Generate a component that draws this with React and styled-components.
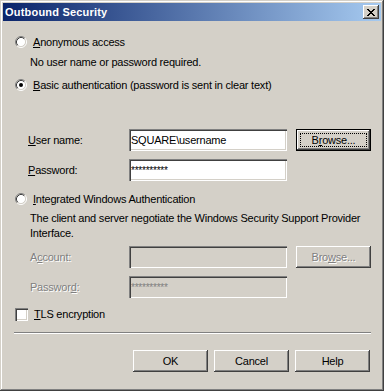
import styled, { createGlobalStyle, css } from "styled-components";

const GlobalStyle = createGlobalStyle`
  html, body {
    margin: 0;
    padding: 0;
    background: #d4d0c8;
  }
  * {
    box-sizing: border-box;
  }
`;

const FONT = `"Liberation Sans", Arial, sans-serif`;

const Window = styled.div`
  width: 384px;
  height: 391px;
  padding: 3px;
  background: #d4d0c8;
  font-family: ${FONT};
  font-size: 11px;
  letter-spacing: -0.22px;
  color: #000;
  box-shadow: inset -1px -1px #404040, inset 1px 1px #d4d0c8,
    inset -2px -2px #808080, inset 2px 2px #ffffff;
  display: flex;
  flex-direction: column;
`;

const TitleBar = styled.div`
  height: 18px;
  display: flex;
  align-items: center;
  justify-content: space-between;
  padding: 0 2px 0 2px;
  background: linear-gradient(to right, #0a246a, #a6caf0);
`;

const Title = styled.span`
  color: #fff;
  font-weight: bold;
  font-size: 11px;
  letter-spacing: 0.2px;
`;

const raised = css`
  background: #d4d0c8;
  border: none;
  box-shadow: inset -1px -1px #404040, inset 1px 1px #ffffff,
    inset -2px -2px #808080, inset 2px 2px #d4d0c8;
`;

const CloseButton = styled.button`
  ${raised};
  width: 16px;
  height: 14px;
  padding: 0;
  display: flex;
  align-items: center;
  justify-content: center;
`;

const Body = styled.div`
  display: flex;
  flex-direction: column;
  padding: 0 10px 0 12px;
`;

const Option = styled.label`
  display: flex;
  align-items: center;
  gap: 6px;
  height: 16px;
  margin-top: ${(p) => p.$top}px;
`;

const Desc = styled.p`
  margin: ${(p) => p.$top}px 0 0 15px;
  line-height: ${(p) => p.$lh || 14}px;
  max-width: 345px;
`;

const Key = styled.span`
  text-decoration: underline;
`;

const FieldRow = styled.div`
  display: grid;
  grid-template-columns: 92px 158px 75px;
  column-gap: 9px;
  align-items: center;
  height: 22px;
  padding-left: 13px;
  margin-top: ${(p) => p.$top}px;
`;

const Label = styled.span`
  color: ${(p) => (p.$disabled ? "#808080" : "#000")};
  text-shadow: ${(p) => (p.$disabled ? "1px 1px #ffffff" : "none")};
  margin-left: ${(p) => (p.$disabled ? 2 : 0)}px;
`;

const TextBox = styled.input`
  height: 22px;
  width: 158px;
  margin: 0;
  padding: 0 1px 0 2px;
  border: none;
  outline: none;
  font-family: ${FONT};
  font-size: ${(p) => (p.$stars ? 10 : 11)}px;
  letter-spacing: -0.22px;
  color: ${(p) => (p.disabled ? "#808080" : "#000")};
  background: ${(p) => (p.disabled ? "#d4d0c8" : "#ffffff")};
  box-shadow: inset 1px 1px #808080, inset 2px 2px #404040,
    inset -1px -1px #ffffff, inset -2px -2px #d4d0c8;
`;

const Button = styled.button`
  ${raised};
  position: relative;
  width: 75px;
  height: 22px;
  padding: 0;
  font-family: ${FONT};
  font-size: 11px;
  letter-spacing: -0.22px;
  color: ${(p) => (p.disabled ? "#808080" : "#000")};
  text-shadow: ${(p) => (p.disabled ? "1px 1px #ffffff" : "none")};
  ${(p) =>
    p.$focused &&
    css`
      box-shadow: inset 0 0 0 1px #000, inset -2px -2px #404040,
        inset 2px 2px #ffffff, inset -3px -3px #808080;
      &::after {
        content: "";
        position: absolute;
        inset: 4px;
        border: 1px dotted #000;
      }
    `}
`;

const CheckRow = styled.label`
  display: flex;
  align-items: center;
  gap: 6px;
  height: 16px;
  margin-top: 8px;
`;

const CheckBox = styled.span`
  width: 13px;
  height: 13px;
  background: #fff;
  box-shadow: inset 1px 1px #808080, inset 2px 2px #404040,
    inset -1px -1px #ffffff, inset -2px -2px #d4d0c8;
`;

const Separator = styled.hr`
  margin: 10px 0 0 -1px;
  width: 357px;
  height: 2px;
  border: none;
  border-top: 1px solid #808080;
  border-bottom: 1px solid #ffffff;
`;

const ButtonBar = styled.div`
  display: flex;
  justify-content: flex-end;
  gap: 6px;
  margin-top: 16px;
  padding-right: 1px;
`;

function Radio({ checked }) {
  return (
    <svg width="12" height="12" viewBox="0 0 12 12">
      <circle cx="6" cy="6" r="4.5" fill="#ffffff" />
      <path d="M2.11 9.89 A5.5 5.5 0 0 1 9.89 2.11" stroke="#808080" fill="none" />
      <path d="M9.89 2.11 A5.5 5.5 0 0 1 2.11 9.89" stroke="#ffffff" fill="none" />
      <path d="M2.82 9.18 A4.5 4.5 0 0 1 9.18 2.82" stroke="#404040" fill="none" />
      <path d="M9.18 2.82 A4.5 4.5 0 0 1 2.82 9.18" stroke="#d4d0c8" fill="none" />
      {checked && <circle cx="6" cy="6" r="2" fill="#000" />}
    </svg>
  );
}

export default function App() {
  return (
    <>
      <GlobalStyle />
      <Window>
        <TitleBar>
          <Title>Outbound Security</Title>
          <CloseButton>
            <svg width="8" height="7" viewBox="0 0 8 7">
              <path
                d="M0 0h2v1h1v1h2V1h1V0h2v1H7v1H6v1H5v1h1v1h1v1h1v1H6V6H5V5H3v1H2v1H0V6h1V5h1V4h1V3H2V2H1V1H0z"
                fill="#000"
              />
            </svg>
          </CloseButton>
        </TitleBar>
        <Body>
          <Option $top={13}>
            <Radio />
            <span>
              <Key>A</Key>nonymous access
            </span>
          </Option>
          <Desc $top={5}>No user name or password required.</Desc>
          <Option $top={8}>
            <Radio checked />
            <span>
              <Key>B</Key>asic authentication (password is sent in clear text)
            </span>
          </Option>

          <FieldRow $top={36}>
            <Label>
              <Key>U</Key>ser name:
            </Label>
            <TextBox readOnly value="SQUARE\username" />
            <Button $focused>
              B<Key>r</Key>owse...
            </Button>
          </FieldRow>
          <FieldRow $top={8}>
            <Label>
              <Key>P</Key>assword:
            </Label>
            <TextBox readOnly $stars value="**********" />
          </FieldRow>

          <Option $top={10}>
            <Radio />
            <span>
              <Key>I</Key>ntegrated Windows Authentication
            </span>
          </Option>
          <Desc $top={4} $lh={15}>
            The client and server negotiate the Windows Security Support
            Provider Interface.
          </Desc>

          <FieldRow $top={5}>
            <Label $disabled>
              A<Key>c</Key>count:
            </Label>
            <TextBox disabled value="" />
            <Button disabled>
              Bro<Key>w</Key>se...
            </Button>
          </FieldRow>
          <FieldRow $top={8}>
            <Label $disabled>
              Passwor<Key>d</Key>:
            </Label>
            <TextBox disabled $stars value="**********" />
          </FieldRow>

          <CheckRow>
            <CheckBox />
            <span>
              <Key>T</Key>LS encryption
            </span>
          </CheckRow>

          <Separator />

          <ButtonBar>
            <Button>OK</Button>
            <Button>Cancel</Button>
            <Button>Help</Button>
          </ButtonBar>
        </Body>
      </Window>
    </>
  );
}
